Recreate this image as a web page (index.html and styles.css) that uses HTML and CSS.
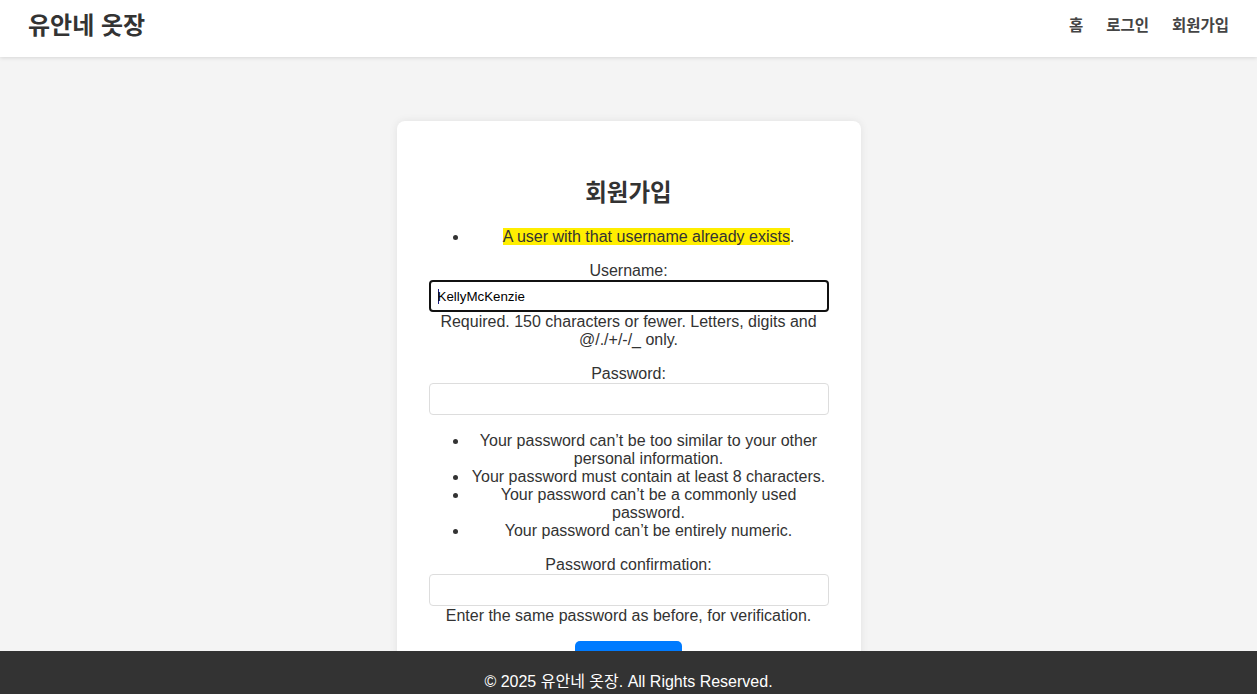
FILE: index.html
```html
<!DOCTYPE html>
<html lang="ko">
<head>
<meta charset="utf-8">
<title>회원가입 - 유안네 옷장</title>
<link rel="stylesheet" href="styles.css">
</head>
<body>
<header class="site-header">
  <div class="logo">유안네 옷장</div>
  <nav class="nav">
    <a href="#">홈</a>
    <a href="#">로그인</a>
    <a href="#">회원가입</a>
  </nav>
</header>
<main class="main">
  <section class="card">
    <h2 class="title">회원가입</h2>
    <form class="form">
      <ul class="errorlist"><li><mark class="err">A user with that username already exists</mark>.</li></ul>
      <div class="field">
        <label class="label" for="u">Username:</label>
        <div class="input focused"><span class="caret"></span>KellyMcKenzie</div>
        <div class="help">Required. 150 characters or fewer. Letters, digits and @/./+/-/_ only.</div>
      </div>
      <div class="field">
        <label class="label">Password:</label>
        <div class="input"></div>
        <ul class="helplist">
          <li>Your password can’t be too similar to your other personal information.</li>
          <li>Your password must contain at least 8 characters.</li>
          <li>Your password can’t be a commonly used password.</li>
          <li>Your password can’t be entirely numeric.</li>
        </ul>
      </div>
      <div class="field">
        <label class="label">Password confirmation:</label>
        <div class="input"></div>
        <div class="help">Enter the same password as before, for verification.</div>
      </div>
      <button type="button" class="btn">회원가입</button>
    </form>
  </section>
</main>
<footer class="footer">© 2025 유안네 옷장. All Rights Reserved.</footer>
</body>
</html>
```

FILE: styles.css
```css
* { box-sizing: border-box; }
html, body { margin: 0; padding: 0; }
body {
  background: #f4f4f4;
  color: #333;
  font-family: "Liberation Sans", Arial, "Noto Sans CJK KR", sans-serif;
  font-size: 16px;
  line-height: 18px;
}
.site-header {
  height: 57px;
  background: #fff;
  display: flex;
  align-items: center;
  justify-content: space-between;
  padding: 0 28px;
  box-shadow: 0 1px 4px rgba(0,0,0,0.12);
  position: relative;
  z-index: 2;
}
.logo {
  font-family: "Noto Sans CJK KR", sans-serif;
  font-weight: 700;
  font-size: 24px;
  line-height: 30px;
  color: #333;
  margin-top: -10px;
}
.nav {
  display: flex;
  gap: 23px;
  margin-top: -9px;
}
.nav a {
  font-family: "Noto Sans CJK KR", sans-serif;
  font-weight: 700;
  font-size: 15.5px;
  color: #444;
  text-decoration: none;
  line-height: 20px;
}
.main {
  padding-top: 64px;
  display: flex;
  justify-content: center;
}
.card {
  width: 464px;
  background: #fff;
  border-radius: 8px;
  padding: 55px 32px 40px;
  text-align: center;
  box-shadow: 0 0 8px rgba(0,0,0,0.08);
}
.title {
  margin: 0;
  font-family: "Noto Sans CJK KR", sans-serif;
  font-size: 23.5px;
  font-weight: 700;
  line-height: 30px;
  color: #333;
}
.form { margin: 0; }
.errorlist {
  margin: 22px 0 16px;
  padding-left: 40px;
}
.err {
  background: #ffee00;
  color: #333;
}
.field { margin-bottom: 16px; }
.label { display: block; }
.input {
  height: 32px;
  border: 1px solid #ddd;
  border-radius: 4px;
  background: #fff;
  text-align: left;
  font-family: "Liberation Sans", Arial, sans-serif;
  font-size: 13.33px;
  line-height: 30px;
  padding-left: 8px;
  color: #000;
}
.input.focused {
  border: 2px solid #111;
  padding-left: 7px;
  padding-top: 1px;
  line-height: 27px;
}
.caret {
  display: inline-block;
  width: 1px;
  height: 15px;
  background: #1a1a80;
  vertical-align: -3px;
  margin-right: -1px;
}
.help { margin-top: 1px; }
.helplist {
  margin: 17px 0 0;
  padding-left: 40px;
}
.btn {
  display: inline-block;
  border: none;
  background: #007bff;
  color: #fff;
  border-radius: 5px;
  padding: 10px 24px;
  font-family: "Noto Sans CJK KR", sans-serif;
  font-size: 16px;
  line-height: 20px;
}
.footer {
  position: fixed;
  left: 0;
  right: 0;
  bottom: 0;
  height: 43px;
  background: #333;
  color: #fff;
  text-align: center;
  padding-top: 22px;
  line-height: 18px;
  font-size: 16px;
  overflow: hidden;
  z-index: 3;
}
```
